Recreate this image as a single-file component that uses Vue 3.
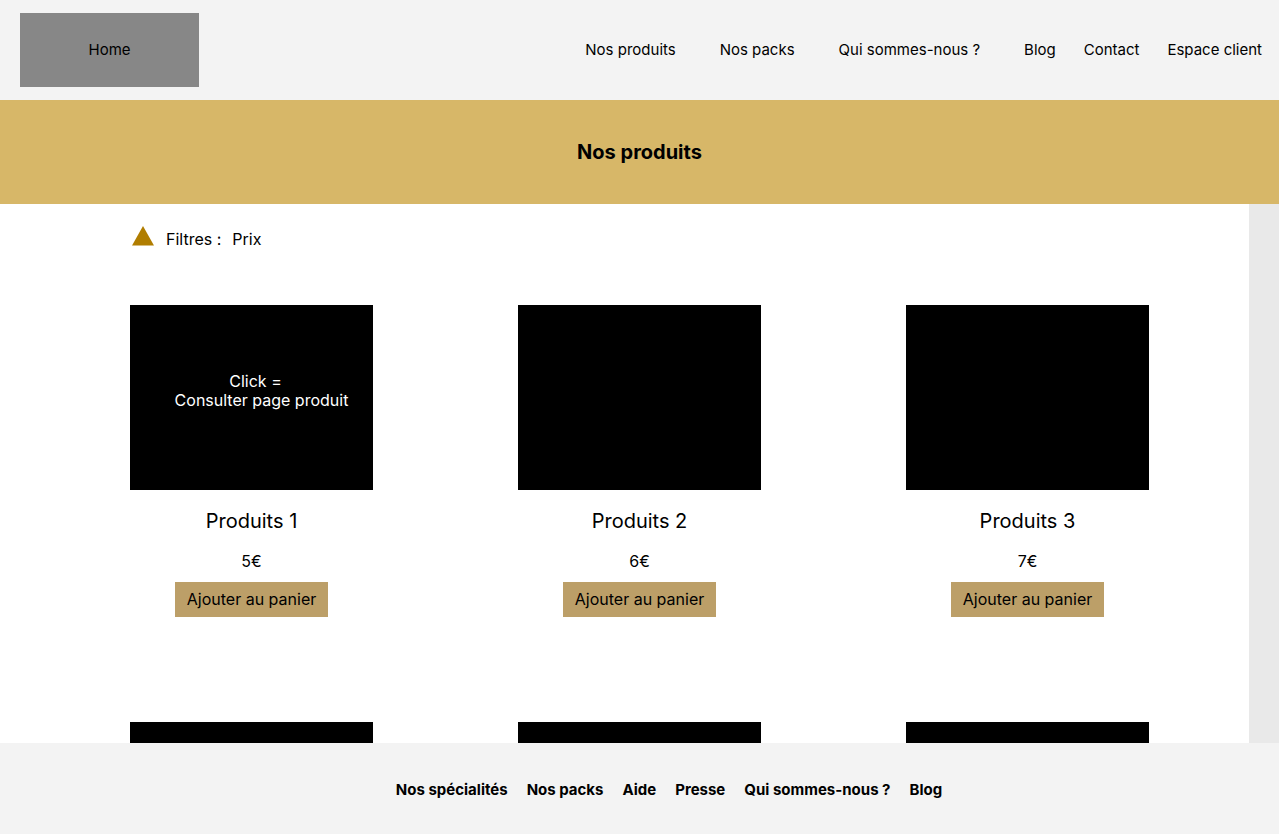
<script setup>
const products = [
  { id: 1, name: 'Produits 1', price: '5€', hint: true },
  { id: 2, name: 'Produits 2', price: '6€' },
  { id: 3, name: 'Produits 3', price: '7€' },
  { id: 4 },
  { id: 5 },
  { id: 6 },
]
const wideLinks = ['Nos produits', 'Nos packs', 'Qui sommes-nous ?']
const narrowLinks = ['Blog', 'Contact', 'Espace client']
const footerLinks = ['Nos spécialités', 'Nos packs', 'Aide', 'Presse', 'Qui sommes-nous ?', 'Blog']
</script>

<template>
  <div class="page">
    <header class="header">
      <a class="home" href="#">Home</a>
      <nav class="nav">
        <div class="group wide">
          <a v-for="l in wideLinks" :key="l" href="#">{{ l }}</a>
        </div>
        <div class="group">
          <a v-for="l in narrowLinks" :key="l" href="#">{{ l }}</a>
        </div>
      </nav>
    </header>
    <div class="banner"><h1>Nos produits</h1></div>
    <main class="main">
      <div class="content">
        <div class="filters">
          <svg class="triangle" width="22" height="20" viewBox="0 0 22 20" aria-hidden="true">
            <path d="M11 0L22 19.5H0Z" fill="#b07d00" />
          </svg>
          <span>Filtres :</span>
          <button type="button" class="filter">Prix</button>
        </div>
        <div class="grid">
          <article v-for="p in products" :key="p.id" class="card">
            <a class="picture" href="#">
              <span v-if="p.hint" class="hint">
                <span class="action">Click =</span>
                <span>Consulter page produit</span>
              </span>
            </a>
            <template v-if="p.name">
              <h2>{{ p.name }}</h2>
              <p>{{ p.price }}</p>
              <button type="button" class="add">Ajouter au panier</button>
            </template>
          </article>
        </div>
      </div>
    </main>
    <footer class="footer">
      <a v-for="l in footerLinks" :key="l" href="#">{{ l }}</a>
    </footer>
  </div>
</template>

<style>
body {
  margin: 0;
}
</style>

<style scoped>
.page {
  display: flex;
  flex-direction: column;
  height: 100vh;
  font-family: Inter, sans-serif;
  font-size: 16px;
  line-height: 19px;
  color: #000;
  background: #e9e9e9;
}
a {
  color: inherit;
  text-decoration: none;
}
button {
  font: inherit;
  color: inherit;
  border: 0;
  cursor: pointer;
}
.header {
  display: flex;
  flex: none;
  align-items: center;
  justify-content: space-between;
  padding: 13px 17px 13px 20px;
  background: #f3f3f3;
  font-size: 15px;
}
.home {
  box-sizing: border-box;
  width: 179px;
  padding: 27px 0 28px;
  text-align: center;
  background: #878787;
}
.nav {
  display: flex;
  gap: 44px;
  padding-bottom: 2px;
}
.group {
  display: flex;
  gap: 28px;
}
.group.wide {
  gap: 44px;
}
.banner {
  flex: none;
  padding: 40px 0;
  text-align: center;
  background: #d7b768;
}
h1 {
  margin: 0;
  font-size: 20px;
  line-height: 24px;
  font-weight: 700;
}
.main {
  flex: 1;
  min-height: 0;
  overflow: hidden;
  margin-right: 30px;
  background: #fff;
}
.content {
  padding: 22px 100px 0 130px;
}
.filters {
  display: flex;
  align-items: flex-start;
  height: 79px;
}
.filters span {
  margin: 4px 11px 0 12px;
}
.triangle {
  margin-left: 2px;
}
.filter {
  margin-top: 4px;
  padding: 0;
  background: none;
}
.grid {
  display: grid;
  grid-template-columns: repeat(3, 243px);
  justify-content: space-between;
  row-gap: 105px;
}
.card {
  display: flex;
  flex-direction: column;
  align-items: center;
}
.picture {
  display: flex;
  align-items: center;
  justify-content: center;
  width: 100%;
  height: 185px;
  background: #000;
  color: #fff;
}
.hint {
  display: flex;
  flex-direction: column;
  align-items: center;
  padding-left: 20px;
  padding-bottom: 14px;
}
.action {
  padding-right: 12px;
}
h2 {
  margin: 19px 0 0;
  font-size: 20px;
  line-height: 24px;
  font-weight: 400;
}
p {
  margin: 19px 0 11px;
}
.add {
  padding: 8px 12px;
  background: #bc9f68;
}
.footer {
  display: flex;
  flex: none;
  justify-content: center;
  gap: 19px;
  padding: 37px 0 35px 59px;
  font-size: 15px;
  font-weight: 700;
  background: #f3f3f3;
}
</style>
